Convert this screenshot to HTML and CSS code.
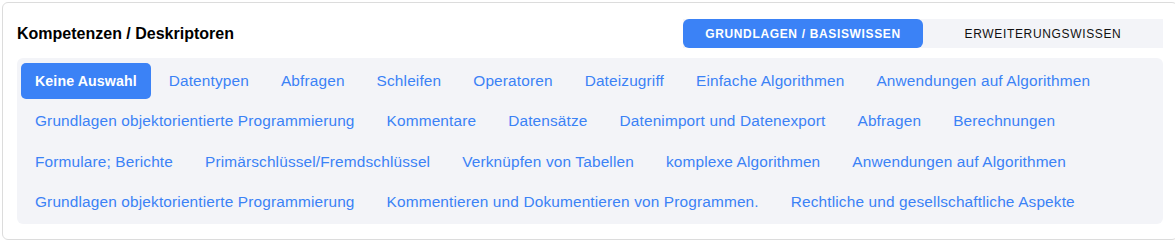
FILE: index.html
```html
<!DOCTYPE html>
<html lang="de">
<head>
    <meta charset="UTF-8">
    <meta name="viewport" content="width=device-width, initial-scale=1.0">
    <title>Kompetenzen / Deskriptoren</title>
    <link rel="stylesheet" href="styles.css">
</head>
<body>
    <div class="card">
        <div class="card-head">
            <h2>Kompetenzen / Deskriptoren</h2>
            <div class="toggle">
                <button class="toggle-btn active">Grundlagen / Basiswissen</button>
                <button class="toggle-btn">Erweiterungswissen</button>
            </div>
        </div>

        <div class="descriptors">
            <a class="chip selected" href="#">Keine Auswahl</a>
            <a class="chip" href="#">Datentypen</a>
            <a class="chip" href="#">Abfragen</a>
            <a class="chip" href="#">Schleifen</a>
            <a class="chip" href="#">Operatoren</a>
            <a class="chip" href="#">Dateizugriff</a>
            <a class="chip" href="#">Einfache Algorithmen</a>
            <a class="chip" href="#">Anwendungen auf Algorithmen</a>
            <a class="chip" href="#">Grundlagen objektorientierte Programmierung</a>
            <a class="chip" href="#">Kommentare</a>
            <a class="chip" href="#">Datensätze</a>
            <a class="chip" href="#">Datenimport und Datenexport</a>
            <a class="chip" href="#">Abfragen</a>
            <a class="chip" href="#">Berechnungen</a>
            <a class="chip" href="#">Formulare; Berichte</a>
            <a class="chip" href="#">Primärschlüssel/Fremdschlüssel</a>
            <a class="chip" href="#">Verknüpfen von Tabellen</a>
            <a class="chip" href="#">komplexe Algorithmen</a>
            <a class="chip" href="#">Anwendungen auf Algorithmen</a>
            <a class="chip" href="#">Grundlagen objektorientierte Programmierung</a>
            <a class="chip" href="#">Kommentieren und Dokumentieren von Programmen.</a>
            <a class="chip" href="#">Rechtliche und gesellschaftliche Aspekte</a>
        </div>
    </div>
</body>
</html>
```

FILE: styles.css
```css
html {
    overflow: hidden;
}
body {
    font-family: 'Liberation Sans', Arial, sans-serif;
    margin: 2px 0 0 2px;
    padding: 0;
    background-color: #fff;
    color: #000;
}
.card {
    width: 1176px;
    box-sizing: border-box;
    border: 1px solid #dcdcdc;
    border-radius: 6px;
    padding: 16px 14px 15px 14px;
    background-color: #fff;
}
.card-head {
    display: flex;
    align-items: center;
    justify-content: space-between;
    height: 29px;
    margin-bottom: 10px;
}
.card-head h2 {
    margin: 0;
    font-size: 16px;
    font-weight: bold;
    color: #000;
}
.toggle {
    display: flex;
    background-color: #f3f4f8;
    height: 29px;
}
.toggle-btn {
    width: 240px;
    border: none;
    background: transparent;
    font-family: inherit;
    font-size: 12px;
    letter-spacing: 0.65px;
    text-transform: uppercase;
    color: #111;
    border-radius: 6px;
    cursor: pointer;
    padding: 0;
}
.toggle-btn.active {
    background-color: #3b82f6;
    color: #fff;
    font-weight: bold;
}
.descriptors {
    display: flex;
    flex-wrap: wrap;
    gap: 5px 4px;
    background-color: #f3f4f8;
    border-radius: 6px;
    padding: 5px 4px 4px 4px;
}
.chip {
    display: flex;
    align-items: center;
    height: 35.5px;
    padding: 0 14px;
    border-radius: 5px;
    font-size: 15.4px;
    letter-spacing: 0.15px;
    color: #3b82f6;
    text-decoration: none;
    white-space: nowrap;
}
.chip.selected {
    background-color: #3b82f6;
    color: #fff;
    font-weight: bold;
    font-size: 14.2px;
    letter-spacing: 0.1px;
}
```
